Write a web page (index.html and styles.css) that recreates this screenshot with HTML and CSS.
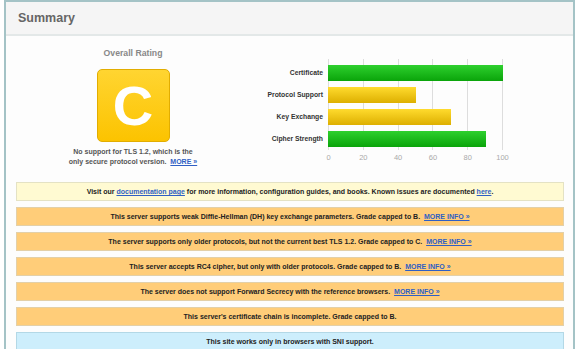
FILE: index.html
```html
<!DOCTYPE html>
<html lang="en">
<head>
    <meta charset="UTF-8">
    <title>SSL Report: Summary</title>
    <link rel="stylesheet" href="styles.css">
</head>
<body>
    <div class="frame">
        <div class="section-head">Summary</div>
        <div class="section-body">
            <div class="summary">
                <div class="rating">
                    <div class="rating-title">Overall Rating</div>
                    <div class="grade">C</div>
                    <div class="rating-note">No support for TLS 1.2, which is the<br>only secure protocol version. &nbsp;<a href="#">MORE &raquo;</a></div>
                </div>
                <div class="chart">
                    <div class="chart-main">
                        <div class="chart-labels">
                            <div>Certificate</div>
                            <div>Protocol Support</div>
                            <div>Key Exchange</div>
                            <div>Cipher Strength</div>
                        </div>
                        <div class="plot">
                            <div class="bar green" style="width: 100%"></div>
                            <div class="bar yellow" style="width: 50%"></div>
                            <div class="bar yellow" style="width: 70%"></div>
                            <div class="bar green" style="width: 90%"></div>
                        </div>
                    </div>
                    <div class="axis">
                        <span>0</span><span>20</span><span>40</span><span>60</span><span>80</span><span>100</span>
                    </div>
                </div>
            </div>

            <div class="notices">
                <div class="notice info">Visit our <a href="#">documentation page</a> for more information, configuration guides, and books. Known issues are documented <a href="#">here</a>.</div>
                <div class="notice warn">This server supports weak Diffie-Hellman (DH) key exchange parameters. Grade capped to B. &nbsp;<a href="#">MORE INFO &raquo;</a></div>
                <div class="notice warn">The server supports only older protocols, but not the current best TLS 1.2. Grade capped to C. &nbsp;<a href="#">MORE INFO &raquo;</a></div>
                <div class="notice warn">This server accepts RC4 cipher, but only with older protocols. Grade capped to B. &nbsp;<a href="#">MORE INFO &raquo;</a></div>
                <div class="notice warn">The server does not support Forward Secrecy with the reference browsers. &nbsp;<a href="#">MORE INFO &raquo;</a></div>
                <div class="notice warn">This server's certificate chain is incomplete. Grade capped to B.</div>
                <div class="notice sni">This site works only in browsers with SNI support.</div>
            </div>
        </div>
    </div>
</body>
</html>
```

FILE: styles.css
```css
body {
    margin: 0;
    background-color: #fff;
    font-family: "Liberation Sans", Arial, sans-serif;
    color: #333;
}
a {
    color: #2f5fc4;
    text-decoration: underline;
}
.frame {
    margin-left: 4px;
    width: 567px;
    border: 2px solid #a4c3c6;
    border-bottom: none;
    background-color: #fdfdfd;
}
.section-head {
    height: 32px;
    line-height: 33px;
    padding-left: 12px;
    background-color: #f5f5f5;
    border-bottom: 2px solid #e3e8e8;
    font-size: 12.5px;
    font-weight: bold;
    color: #666;
}
.section-body {
    height: 320px;
}
.summary {
    display: flex;
    padding-top: 12px;
}
/* overall rating */
.rating {
    width: 254px;
    text-align: center;
}
.rating-title {
    font-size: 8.7px;
    font-weight: bold;
    color: #888;
    line-height: 11px;
}
.grade {
    width: 71px;
    height: 71px;
    margin: 10px auto 0;
    border: 1px solid #e2ad00;
    border-radius: 5px;
    background: linear-gradient(#ffd531, #fcc300);
    color: #fff;
    font-size: 56px;
    font-weight: bold;
    line-height: 71px;
}
.rating-note {
    margin-top: 5px;
    font-size: 7px;
    font-weight: bold;
    line-height: 10px;
    color: #555;
}
/* chart */
.chart {
    display: flex;
    flex-direction: column;
    margin-top: 11px;
}
.chart-main {
    display: flex;
}
.chart-labels {
    width: 63px;
    padding-top: 6px;
    display: flex;
    flex-direction: column;
    gap: 6px;
    text-align: right;
    font-size: 6.8px;
    font-weight: bold;
    color: #333;
    white-space: nowrap;
}
.chart-labels div {
    line-height: 16px;
    height: 16px;
}
.plot {
    width: 175px;
    margin-left: 5px;
    padding: 6px 0 3px;
    display: flex;
    flex-direction: column;
    gap: 6px;
    background-image: repeating-linear-gradient(90deg, #ddd 0 1px, transparent 1px 34.8px);
}
.bar {
    height: 16px;
}
.green {
    background: linear-gradient(#2ed02e, #0aa40a);
}
.yellow {
    background: linear-gradient(#ffdb2e, #ddaf00);
}
.axis {
    display: flex;
    justify-content: space-between;
    width: 175px;
    margin-left: 68px;
    margin-top: 3px;
    font-size: 7.5px;
    color: #aaa;
    line-height: 10px;
}
.axis span {
    width: 1px;
    display: flex;
    justify-content: center;
}
/* notices */
.notices {
    margin: 15px 9px 0 10px;
    display: flex;
    flex-direction: column;
    gap: 6px;
}
.notice {
    height: 17px;
    line-height: 17px;
    text-align: center;
    font-size: 7px;
    font-weight: bold;
    color: #222;
    border: 1px solid;
}
.info {
    background-color: #fffad2;
    border-color: #e4e2c4;
}
.warn {
    background-color: #ffcd79;
    border-color: #e3d0a8;
}
.sni {
    background-color: #cdeefc;
    border-color: #b3d8e6;
}
```
